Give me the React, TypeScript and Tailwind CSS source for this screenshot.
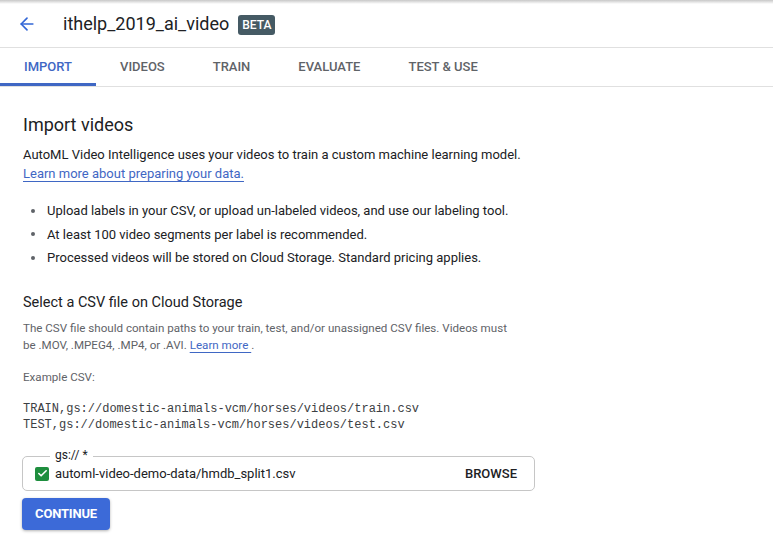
import { ArrowLeft, Check } from "lucide-react";

const tabs = ["IMPORT", "VIDEOS", "TRAIN", "EVALUATE", "TEST & USE"];

const bullets = [
  "Upload labels in your CSV, or upload un-labeled videos, and use our labeling tool.",
  "At least 100 video segments per label is recommended.",
  "Processed videos will be stored on Cloud Storage. Standard pricing applies.",
];

export default function App() {
  return (
    <div className="w-[773px] h-[560px] bg-white overflow-hidden font-['Roboto',sans-serif] text-[#202124]">
      {/* top shadow from the console bar */}
      <div className="h-[4px] bg-gradient-to-b from-[#c8c8c8] to-white" />

      {/* Header */}
      <div className="flex items-center h-[44px] pb-[4px] border-b border-[#e0e0e0]">
        <button className="ml-[16px] w-[22px] h-[22px] flex items-center justify-center text-[#3367d6]">
          <ArrowLeft size={20} strokeWidth={2} />
        </button>
        <h1 className="ml-[25px] text-[18px] leading-none text-[#202124]">ithelp_2019_ai_video</h1>
        <span className="ml-[9px] mt-[2px] px-[4px] h-[20px] flex items-center rounded-[3px] bg-[#455a64] text-white text-[12px] font-medium">
          BETA
        </span>
      </div>

      {/* Tabs */}
      <div className="flex h-[39px] border-b border-[#e0e0e0]">
        {tabs.map((t, i) => (
          <div
            key={t}
            className={`px-6 flex items-center text-[13px] font-medium border-b-[3px] ${
              i === 0 ? "text-[#3f67c4] border-[#3f67c4]" : "text-[#5f6368] border-transparent"
            }`}
          >
            <span className="pt-[3px]">{t}</span>
          </div>
        ))}
      </div>

      {/* Content */}
      <div className="px-[23px] pt-[26px]">
        <h2 className="text-[18px] leading-[24px] text-[#202124]">Import videos</h2>
        <p className="mt-[8px] text-[13px] leading-[19px] text-[#202124]">
          AutoML Video Intelligence uses your videos to train a custom machine learning model.
        </p>
        <p className="text-[13px] leading-[19px]">
          <a className="text-[#3f67c4] underline underline-offset-[3px] decoration-[#3f67c4]">
            Learn more about preparing your data.
          </a>
        </p>

        <ul className="mt-[18px] flex flex-col gap-[4.5px]">
          {bullets.map((b) => (
            <li key={b} className="flex items-center text-[13px] leading-[19px] text-[#202124]">
              <span className="w-[24px] pl-[8px] flex">
                <span className="w-[4px] h-[4px] rounded-full bg-[#5f6368]" />
              </span>
              <span>{b}</span>
            </li>
          ))}
        </ul>

        <h3 className="mt-[26px] text-[14.5px] leading-[20px] text-[#202124]">Select a CSV file on Cloud Storage</h3>
        <p className="mt-[7px] text-[11.6px] leading-[17px] text-[#5f6368]">
          The CSV file should contain paths to your train, test, and/or unassigned CSV files. Videos must
          <br />
          be .MOV, .MPEG4, .MP4, or .AVI.{" "}
          <a className="text-[#3f67c4] underline underline-offset-[3px] decoration-[#3f67c4]">Learn more </a>.
        </p>
        <p className="mt-[15px] text-[11.6px] leading-[17px] text-[#5f6368]">Example CSV:</p>
        <pre className="mt-[15px] font-['Liberation_Mono',monospace] text-[12px] leading-[16px] text-[#3c4043]">
          {"TRAIN,gs://domestic-animals-vcm/horses/videos/train.csv\nTEST,gs://domestic-animals-vcm/horses/videos/test.csv"}
        </pre>

        {/* Input field */}
        <div className="relative mt-[23px] w-[513px] -ml-[1px] h-[35px] border border-[#c6c6c6] rounded-[5px] flex items-center pl-[12px] pr-[17px]">
          <span className="absolute -top-[10px] left-[27px] px-[5px] bg-white text-[12px] leading-[16px] text-[#202124]">
            gs:// *
          </span>
          <span className="w-[14px] h-[14px] rounded-[2px] bg-[#1e8e3e] flex items-center justify-center text-white">
            <Check size={11} strokeWidth={3.5} />
          </span>
          <span className="ml-[6px] flex-1 text-[13px] text-[#202124]">automl-video-demo-data/hmdb_split1.csv</span>
          <span className="text-[13px] font-medium text-[#202124]">BROWSE</span>
        </div>

        <button className="mt-[7px] -ml-[1px] w-[88px] h-[32px] rounded-[4px] bg-[#3c6ad8] text-white text-[13px] font-bold tracking-[-0.2px] shadow-[0_1px_3px_rgba(0,0,0,0.3)]">
          CONTINUE
        </button>
      </div>
    </div>
  );
}
